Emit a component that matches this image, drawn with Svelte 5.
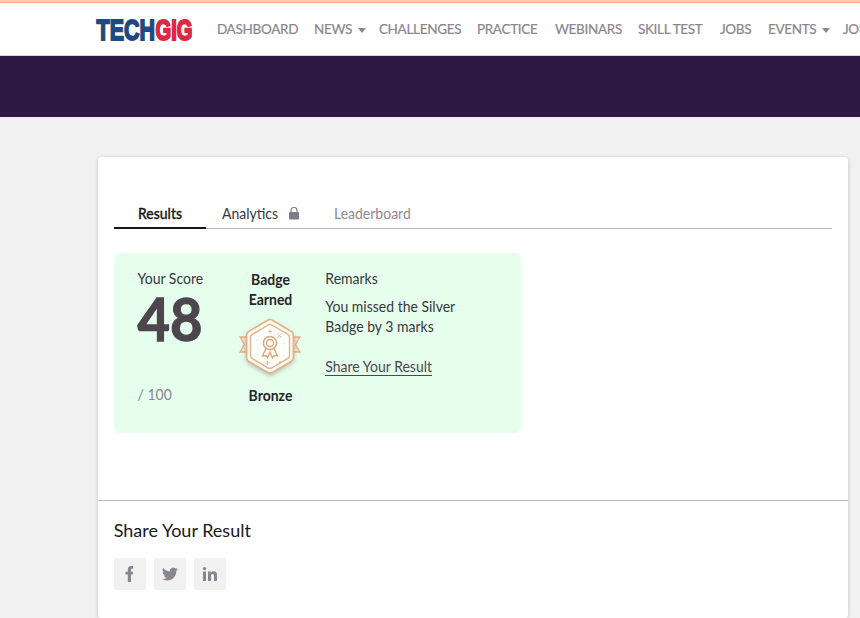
<script>
  const nav = [
    { label: 'DASHBOARD', width: 97 },
    { label: 'NEWS', width: 65, menu: true },
    { label: 'CHALLENGES', width: 98 },
    { label: 'PRACTICE', width: 78 },
    { label: 'WEBINARS', width: 83 },
    { label: 'SKILL TEST', width: 82 },
    { label: 'JOBS', width: 48 },
    { label: 'EVENTS', width: 75, menu: true },
    { label: 'JOBS', width: 60 }
  ];
</script>

<div class="page">
  <div class="progress"></div>
  <header>
    <svg class="logo" width="98" height="26" viewBox="0 0 98 26" role="img" aria-label="TechGig">
      <g transform="translate(0 23) scale(1 1.350)" font-size="22" font-weight="900">
        <text x="0.500" y="0" textLength="58.500" lengthAdjust="spacingAndGlyphs" fill="#1d4a82" stroke="#1d4a82" stroke-width="1.300">TECH</text>
        <text x="59.500" y="0" textLength="37" lengthAdjust="spacingAndGlyphs" fill="#dc2840" stroke="#dc2840" stroke-width="1.500">GIG</text>
      </g>
    </svg>
    <nav>
      {#each nav as item}
        <a style:width="{item.width}px">{item.label}{#if item.menu}<i></i>{/if}</a>
      {/each}
    </nav>
  </header>
  <div class="banner"></div>

  <main>
    <section class="result">
      <div class="tabs">
        <div class="tab active"><span class="t">Results</span></div>
        <div class="tab analytics"><span class="t">Analytics</span>
          <svg width="10" height="13" viewBox="0 0 10 13"><path d="M2 6V3.500a3 3 0 0 1 6 0V6" fill="none" stroke="#85838f" stroke-width="1.2"/><rect y="5" width="10" height="7.500" rx="1" fill="#7d7c88"/></svg>
        </div>
        <div class="tab muted"><span class="t">Leaderboard</span></div>
      </div>
      <div class="score-card">
        <div class="score">
          <span class="t">Your Score</span>
          <strong>48</strong>
          <small class="t">/ 100</small>
        </div>
        <div class="badge">
          <b><span class="t">Badge</span><br /><span class="t">Earned</span></b>
          <svg width="66" height="66" viewBox="0 0 66 66" fill="none" stroke="#e2b388">
            <g fill="#f9dfc9" stroke-width="1.3">
              <path d="M11 23H3l4.500 7.500L3 38h8zM55 23h8l-4.500 7.500L63 38h-8z"/>
              <path d="M9.500 38v4l3-2M56.500 38v4l-3-2" />
            </g>
            <path class="hex" d="M33 5.500Q34 5.500 36 6.700L54 17.300Q56.300 18.700 56.300 21V44Q56.300 46.200 54 47.500L36 58Q33 59.800 30 58L12 47.500Q9.700 46.200 9.700 44V21Q9.700 18.700 12 17.300L30 6.700Q32 5.500 33 5.500Z" fill="#fffaf5" stroke-width="1.6"/>
            <path d="M33 10L50.500 20.200Q52.500 21.500 52.500 23.500V41.500Q52.500 43.500 50.500 44.700L35 53.800Q33 55 31 53.800L15.500 44.700Q13.500 43.500 13.500 41.500V23.500Q13.500 21.500 15.500 20.200Z" fill="#fff" stroke-width="1.4"/>
            <circle cx="33" cy="29" r="6.600" stroke="#dfa575" stroke-width="1.5"/>
            <circle cx="33" cy="29" r="3.500" stroke="#dfa575" stroke-width="1.3"/>
            <path d="M29 34.500L25.500 42l3.300-.5 1.800 2.500 2.400-6 2.400 6 1.800-2.500 3.300.5L37 34.500" stroke="#dfa575" stroke-width="1.3"/>
            <path d="M33 15.500v4M31 17.500h4M40.500 19.500l4 4M44.500 19.500l-4 4M30.500 47v4M28.500 49h4" stroke-width=".9"/>
            <g fill="#e2b388" stroke="none"><circle cx="43" cy="48" r="1"/><circle cx="20" cy="26" r=".6"/><circle cx="47" cy="29" r=".6"/><circle cx="21" cy="40" r=".6"/></g>
          </svg>
          <b class="level"><span class="t">Bronze</span></b>
        </div>
        <div class="remarks">
          <span class="t">Remarks</span>
          <p><span class="t">You missed the Silver</span><br /><span class="t">Badge by 3 marks</span></p>
          <a><span class="t">Share Your Result</span></a>
        </div>
      </div>
    </section>
    <section class="share">
      <h2>Share Your Result</h2>
      <div class="social">
        <a aria-label="Facebook"><svg width="16" height="18" viewBox="0 0 16 18"><path d="M5.800 17V9.500H3.500V6.700h2.300V4.500C5.800 2.100 7.200 1 9.400 1h1.700v2.800H9.900c-.7 0-.9.4-.9 1.300v1.600h2.100l-.3 2.800H9V17z"/></svg></a>
        <a aria-label="Twitter"><svg width="16" height="16" viewBox="0 0 24 24"><path d="M23.950 4.570a10 10 0 0 1-2.820.77 4.960 4.960 0 0 0 2.160-2.720c-.95.550-2 .950-3.130 1.190a4.920 4.920 0 0 0-8.380 4.480C7.690 8.090 4.070 6.130 1.640 3.160a4.920 4.920 0 0 0 1.520 6.570 4.900 4.900 0 0 1-2.230-.61v.06a4.920 4.920 0 0 0 3.950 4.830 5 5 0 0 1-2.210.08 4.940 4.940 0 0 0 4.600 3.420A9.870 9.870 0 0 1 0 19.540a14 14 0 0 0 7.550 2.210c9.050 0 14-7.500 14-13.980 0-.210 0-.42-.01-.63a9.940 9.940 0 0 0 2.410-2.570z"/></svg></a>
        <a aria-label="LinkedIn"><svg width="16" height="16" viewBox="0 0 16 16"><circle cx="2.500" cy="2.600" r="1.700"/><path d="M1 5.500h3V15H1zM6 5.500h2.800v1.300c.6-1 1.600-1.600 2.900-1.600 2.400 0 3.300 1.500 3.300 4V15h-3V9.900c0-1.300-.4-2-1.400-2-1.100 0-1.600.8-1.600 2V15H6z"/></svg></a>
      </div>
    </section>
  </main>
</div>

<style>
  .page { height: 618px; overflow: hidden; background: #f1f1f1; font-family: Lato, sans-serif; font-size: 14px; line-height: 20px; color: #39363d; }
  .t { display: inline-block; transform: translateY(-.5px) scaleY(1.09); }
  .progress { height: 3px; box-sizing: border-box; background: #ffcab9; border-bottom: 1px solid #ffaa90; }
  header { height: 53px; box-sizing: border-box; background: #fff; border-bottom: 1px solid #d5d2da; display: flex; padding-left: 96px; }
  .logo { flex: none; margin-top: 14px; overflow: visible; font-family: "Liberation Sans", sans-serif; }
  nav { display: flex; flex: none; margin: 16px 0 0 22.900px; color: #8a858e; }
  nav a { flex: none; white-space: nowrap; font-size: 13.5px; letter-spacing: -.3px; -webkit-text-stroke: .2px; }
  nav i { display: inline-block; margin-left: 5.500px; border: 4px solid transparent; border-top: 5px solid #8a858e; border-bottom: 0; vertical-align: 1px; }
  .banner { height: 61px; background: #2e1844; }
  main { width: 750px; height: 461px; margin: 40px 0 0 98px; background: #fff; border-radius: 3px; box-shadow: 0 1px 4px rgba(0,0,0,.2); }
  .result { height: 344px; box-sizing: border-box; padding: 40px 16px 0; border-bottom: 1px solid #bbb; }
  .tabs { display: flex; height: 32px; box-sizing: border-box; border-bottom: 1px solid #bbb; }
  .tab { height: 32px; box-sizing: border-box; padding-top: 7px; }
  .active { width: 92px; text-align: center; color: #19171c; border-bottom: 2px solid #19171c; -webkit-text-stroke: .3px; }
  .active span { font-weight: 500; }
  .analytics { width: 112px; padding-left: 16px; display: flex; }
  .analytics span { width: 67px; height: 20px; }
  .analytics svg { margin-top: 3px; }
  .muted { padding-left: 16px; color: #8d8991; }
  .score-card { display: flex; margin-top: 24px; width: 407px; height: 180px; background: #e6ffed; border-radius: 6px; }
  .score { width: 98px; padding: 16px 0 0 23.500px; box-sizing: border-box; display: flex; flex-direction: column; }
  .score strong { font-size: 56px; line-height: 56px; margin-top: 2px; color: #4d464c; -webkit-text-stroke: 1.2px; transform: translateY(-.5px) scaleY(1.05); }
  .score small { font-size: 14px; margin-top: 38px; color: #8a858e; }
  .badge { width: 117px; padding-top: 17px; display: flex; flex-direction: column; align-items: center; text-align: center; color: #27242a; }
  .badge svg { margin: 4px 2px 0 0; }
  .hex { filter: drop-shadow(0 2px 2px rgba(80,60,40,.3)); }
  .badge .level { margin-top: 6px; }
  .remarks { padding-top: 16px; margin-left: -3.700px; }
  p { margin: 8px 0 20px; }
  .remarks a { display: inline-block; height: 17px; line-height: 17px; border-bottom: 1px solid #4d464c; color: #4d464c; }
  .share { padding: 16px 16px 0 15.700px; }
  h2 { margin: 0; font-size: 18px; line-height: 26px; font-weight: 400; color: #19171c; }
  .social { display: flex; gap: 8px; margin: 15px 0 0 .3px; }
  .social a { width: 32px; height: 32px; display: flex; align-items: center; justify-content: center; border-radius: 3px; background: #f1f1f1; }
  .social svg { fill: #8a858e; }
</style>
